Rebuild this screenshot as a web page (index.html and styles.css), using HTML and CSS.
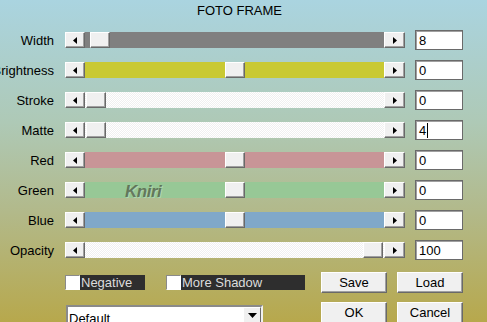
FILE: index.html
```html
<!DOCTYPE html>
<html lang="en">
<head>
  <meta charset="UTF-8" />
  <title>Foto Frame</title>
  <link rel="stylesheet" href="styles.css">
</head>
<body>

  <div class="title">FOTO FRAME</div>

  <div class="rows">
    <div class="row">
      <div class="label"><span>Width</span></div>
      <div class="slider">
        <span class="arrow-btn"><svg width="4" height="7"><path d="M4 0V7L0 3.5z"/></svg></span>
        <div class="track gray"><span class="thumb" style="margin-left:5px"></span></div>
        <span class="arrow-btn"><svg width="4" height="7"><path d="M0 0V7L4 3.5z"/></svg></span>
      </div>
      <div class="num">8</div>
    </div>

    <div class="row">
      <div class="label"><span>Brightness</span></div>
      <div class="slider">
        <span class="arrow-btn"><svg width="4" height="7"><path d="M4 0V7L0 3.5z"/></svg></span>
        <div class="track yellow"><span class="thumb" style="margin-left:140px"></span></div>
        <span class="arrow-btn"><svg width="4" height="7"><path d="M0 0V7L4 3.5z"/></svg></span>
      </div>
      <div class="num">0</div>
    </div>

    <div class="row">
      <div class="label"><span>Stroke</span></div>
      <div class="slider">
        <span class="arrow-btn"><svg width="4" height="7"><path d="M4 0V7L0 3.5z"/></svg></span>
        <div class="track white"><span class="thumb" style="margin-left:1px"></span></div>
        <span class="arrow-btn"><svg width="4" height="7"><path d="M0 0V7L4 3.5z"/></svg></span>
      </div>
      <div class="num">0</div>
    </div>

    <div class="row">
      <div class="label"><span>Matte</span></div>
      <div class="slider">
        <span class="arrow-btn"><svg width="4" height="7"><path d="M4 0V7L0 3.5z"/></svg></span>
        <div class="track white"><span class="thumb" style="margin-left:1px"></span></div>
        <span class="arrow-btn"><svg width="4" height="7"><path d="M0 0V7L4 3.5z"/></svg></span>
      </div>
      <div class="num">4<span class="caret"></span></div>
    </div>

    <div class="row">
      <div class="label"><span>Red</span></div>
      <div class="slider">
        <span class="arrow-btn"><svg width="4" height="7"><path d="M4 0V7L0 3.5z"/></svg></span>
        <div class="track red"><span class="thumb" style="margin-left:140px"></span></div>
        <span class="arrow-btn"><svg width="4" height="7"><path d="M0 0V7L4 3.5z"/></svg></span>
      </div>
      <div class="num">0</div>
    </div>

    <div class="row">
      <div class="label"><span>Green</span></div>
      <div class="slider">
        <span class="arrow-btn"><svg width="4" height="7"><path d="M4 0V7L0 3.5z"/></svg></span>
        <div class="track green"><span class="thumb" style="margin-left:140px"></span></div>
        <span class="arrow-btn"><svg width="4" height="7"><path d="M0 0V7L4 3.5z"/></svg></span>
      </div>
      <div class="num">0</div>
    </div>

    <div class="row">
      <div class="label"><span>Blue</span></div>
      <div class="slider">
        <span class="arrow-btn"><svg width="4" height="7"><path d="M4 0V7L0 3.5z"/></svg></span>
        <div class="track blue"><span class="thumb" style="margin-left:140px"></span></div>
        <span class="arrow-btn"><svg width="4" height="7"><path d="M0 0V7L4 3.5z"/></svg></span>
      </div>
      <div class="num">0</div>
    </div>

    <div class="row">
      <div class="label"><span>Opacity</span></div>
      <div class="slider">
        <span class="arrow-btn"><svg width="4" height="7"><path d="M4 0V7L0 3.5z"/></svg></span>
        <div class="track white"><span class="thumb" style="margin-left:278px"></span></div>
        <span class="arrow-btn"><svg width="4" height="7"><path d="M0 0V7L4 3.5z"/></svg></span>
      </div>
      <div class="num">100</div>
    </div>
  </div>

  <div class="bottom">
    <div class="left">
      <div class="check"><span class="box"></span><span class="check-label">Negative</span></div>
      <div class="check"><span class="box"></span><span class="check-label">More Shadow</span></div>
    </div>
    <div class="btn">Save</div>
    <div class="btn">Load</div>
  </div>

  <div class="bottom second">
    <div class="left">
      <div class="select">
        <span class="select-text">Default</span>
        <span class="select-btn"><svg width="9" height="5"><path d="M0 0H9L4.5 5z"/></svg></span>
      </div>
    </div>
    <div class="btn">OK</div>
    <div class="btn">Cancel</div>
  </div>

  <div class="watermark">Kniri</div>

</body>
</html>
```

FILE: styles.css
```css
* {
  box-sizing: border-box;
}

body {
  margin: 0;
  width: 487px;
  height: 322px;
  overflow: hidden;
  position: relative;
  font-family: 'Liberation Sans', Arial, sans-serif;
  font-size: 13px;
  color: #000;
  background: linear-gradient(#aad4e0 0%, #aec9b6 38%, #b2b98a 66%, #b7a84c 100%);
}

.title {
  height: 25px;
  padding-top: 3px;
  text-align: center;
  padding-right: 8px;
}

.row {
  height: 30px;
  display: flex;
  align-items: center;
}

.label {
  width: 55px;
  flex-shrink: 0;
  display: flex;
  justify-content: flex-end;
  white-space: nowrap;
  overflow: hidden;
  padding-right: 1px;
}

.slider {
  margin-left: 10px;
  width: 340px;
  height: 16px;
  display: flex;
}

.arrow-btn {
  width: 20px;
  height: 16px;
  flex-shrink: 0;
  display: flex;
  align-items: center;
  justify-content: center;
  background: #f0f0f0;
  border: 1px solid;
  border-color: #fff #696969 #696969 #fff;
  box-shadow: inset -1px -1px #a0a0a0;
}

.arrow-btn:last-child {
  width: 21px;
}

.track {
  width: 299px;
  height: 16px;
  display: flex;
}

.thumb {
  width: 20px;
  height: 16px;
  background: #f0f0f0;
  border: 1px solid;
  border-color: #fff #696969 #696969 #fff;
  box-shadow: inset -1px -1px #a0a0a0;
}

.gray { background: #808080; }
.yellow { background: #c9c933; }
.red { background: #c89597; }
.green { background: #97c896; }
.blue { background: #80a8c9; }
.white {
  background: repeating-conic-gradient(#ffffff 0 25%, #f0f0f0 0 50%) 0 0 / 2px 2px;
}

.num {
  margin-left: 10px;
  width: 48px;
  height: 20px;
  background: #fff;
  border: 1px solid #6a6a6a;
  box-shadow: inset 1px 1px #a0a0a0;
  padding: 2px 0 0 3px;
  line-height: 15px;
  display: flex;
}

.caret {
  width: 1px;
  height: 15px;
  margin-left: 1px;
  background: #000;
}

.bottom {
  margin-top: 7px;
  height: 21px;
  display: flex;
  align-items: center;
  padding-left: 65px;
  gap: 10px;
}

.bottom .left {
  width: 246px;
  height: 100%;
  display: flex;
  align-items: center;
}

.check {
  display: flex;
  height: 15px;
}

.check + .check {
  margin-left: 21px;
}

.box {
  width: 15px;
  height: 15px;
  background: #fff;
  border: 1px solid;
  border-color: #8a8a8a #fff #fff #8a8a8a;
}

.check-label {
  background: #2e2e2e;
  color: #dcdcdc;
  line-height: 15px;
  padding-left: 1px;
}

.check:first-child .check-label {
  width: 65px;
}

.check:last-child .check-label {
  width: 124px;
}

.btn {
  width: 66px;
  height: 21px;
  background: #f0f0f0;
  border: 1px solid;
  border-color: #fff #696969 #696969 #fff;
  box-shadow: inset -1px -1px #a0a0a0;
  text-align: center;
  line-height: 19px;
}

.second {
  margin-top: 9px;
  align-items: flex-start;
}

.second .btn {
  height: 24px;
}

.select {
  margin: 5px 0 0 1px;
  width: 197px;
  height: 21px;
  background: #fff;
  border: 2px solid;
  border-color: #8a8a8a #f0f0f0 #f0f0f0 #8a8a8a;
  display: flex;
  justify-content: space-between;
}

.select-text {
  padding: 3px 0 0 1px;
  line-height: 17px;
}

.select-btn {
  width: 18px;
  background: #f0f0f0;
  border: 1px solid;
  border-color: #fff #696969 #696969 #fff;
  display: flex;
  align-items: center;
  justify-content: center;
}

.watermark {
  position: absolute;
  left: 125px;
  top: 182px;
  font-size: 17px;
  font-style: italic;
  font-weight: bold;
  color: rgba(70, 80, 60, 0.7);
  text-shadow: 1px 1px rgba(255, 255, 255, 0.25);
  letter-spacing: -0.5px;
}
```
